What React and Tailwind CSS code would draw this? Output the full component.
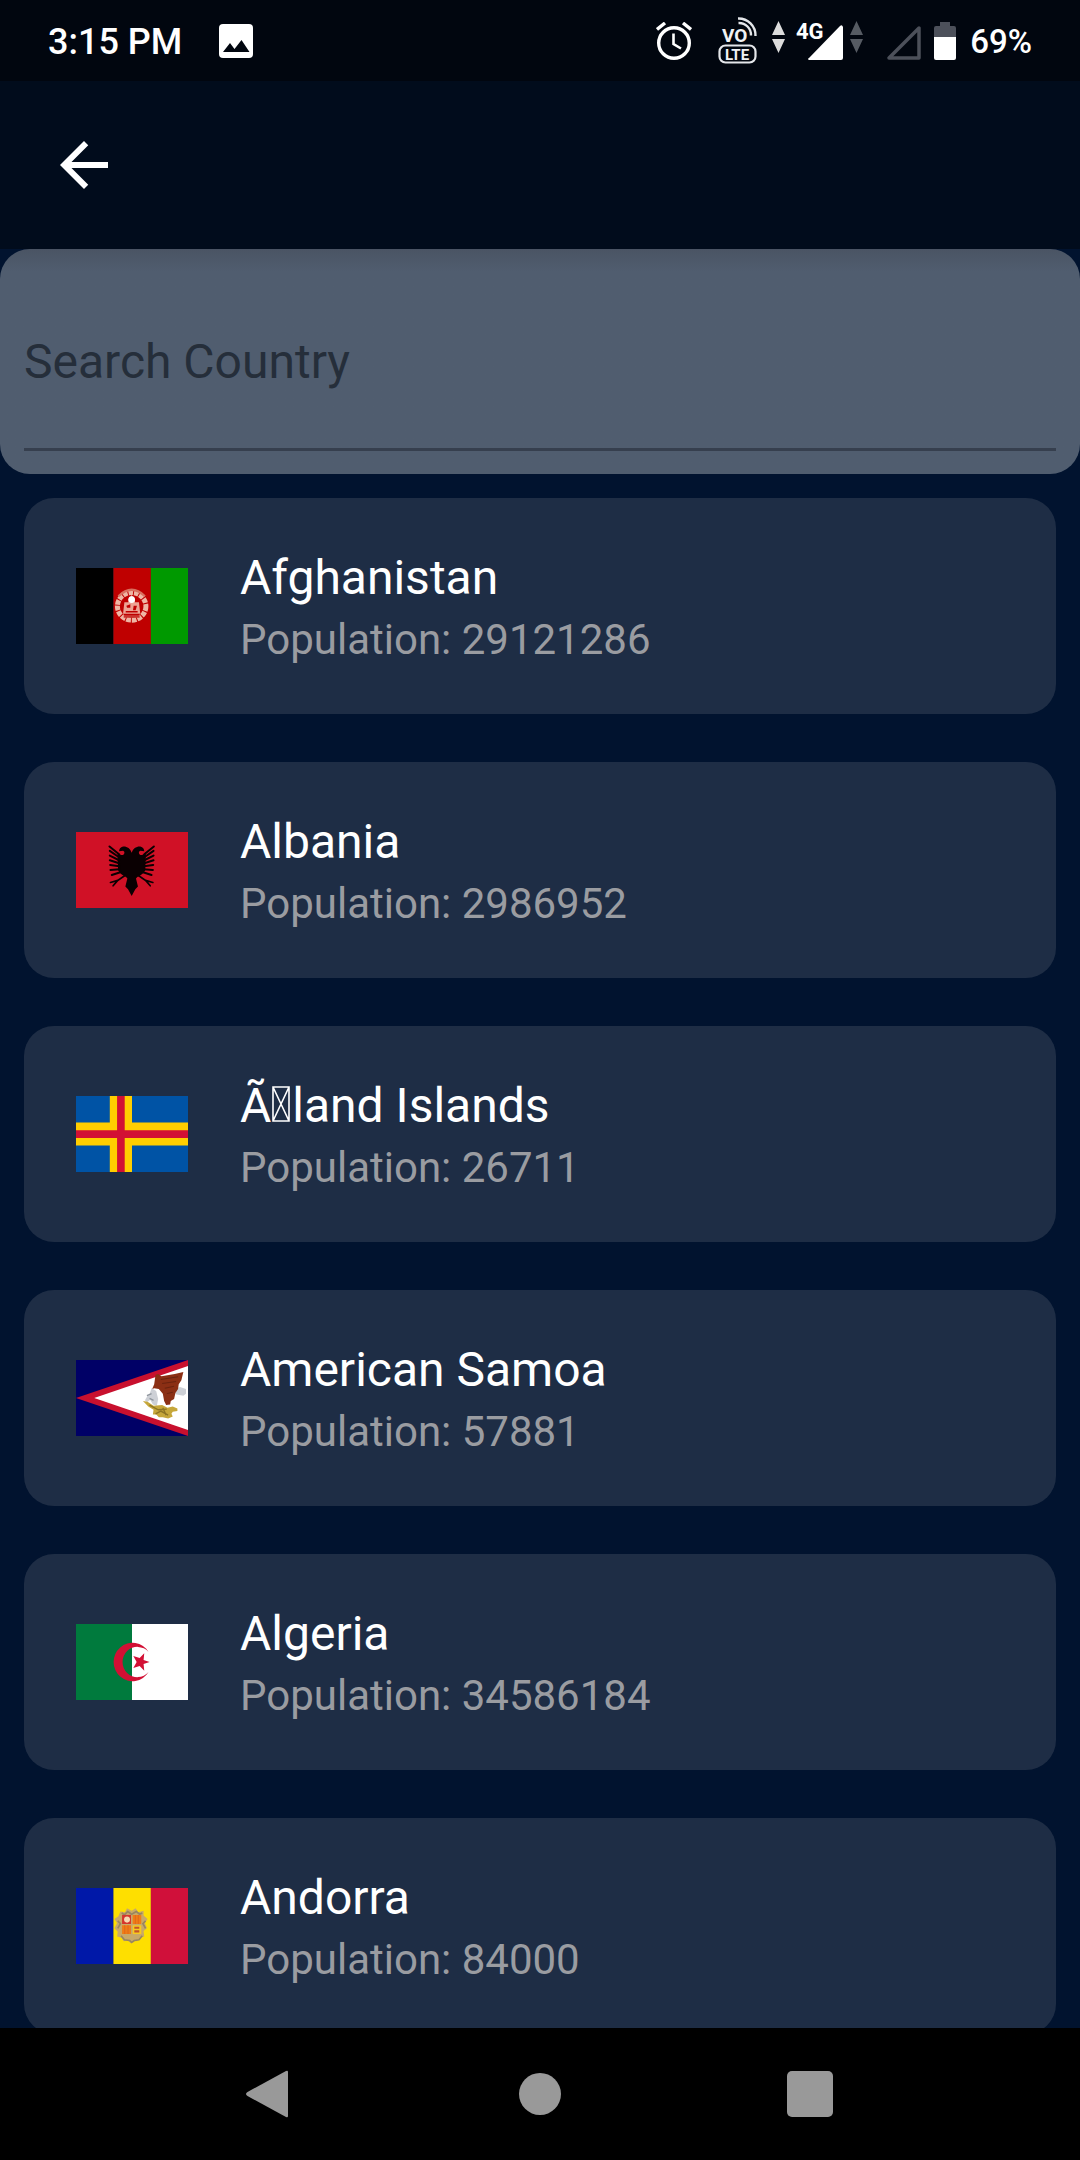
import React from "react";
import { MdArrowBack } from "react-icons/md";

function FlagFrame({ label, children }) {
  return (
    <svg
      role="img"
      aria-label={label}
      viewBox="0 0 338 226"
      preserveAspectRatio="none"
      className="h-[76px] w-[112px] shrink-0"
    >
      {children}
    </svg>
  );
}

function AfghanistanFlag() {
  return (
    <FlagFrame label="Flag of Afghanistan">
      <rect width="113" height="226" fill="#000" />
      <rect x="113" width="113" height="226" fill="#bf0000" />
      <rect x="226" width="112" height="226" fill="#009900" />
      <ellipse cx="168" cy="114" rx="43" ry="41" fill="none" stroke="#efb6a4" strokeWidth="15" strokeDasharray="14 3" />
      <path d="M128 84 Q168 46 208 84" fill="none" stroke="#d9705f" strokeWidth="7" />
      <path d="M168 80l10 12v10h12l4 34h-52l4-34h12v-10z" fill="#eda494" />
      <path d="M152 112l12-4v10h-10z M174 112h10l-4 14h-8z M150 128h36v4h-36z" fill="#bf0000" />
      <path d="M144 140h48v8h-48z" fill="#c9342e" />
      <circle cx="168" cy="94" r="10" fill="#fff" />
    </FlagFrame>
  );
}

function AlbaniaFlag() {
  return (
    <FlagFrame label="Flag of Albania">
      <rect width="338" height="226" fill="#d01126" />
      <g fill="#0a0002">
        <path d="M168 62c-4-14-15-20-26-19c-8 2-12 8-12 14l12-1c6 3 5 8 1 12c-5 2-10-1-18-8l2 54c5 10 14 16 24 20l4 4l-6 24l8 8l11 20l11-20l8-8l-6-24l4-4c10-4 19-10 24-20l2-54c-8 7-13 10-18 8c-4-4-5-9 1-12l12 1c0-6-4-12-12-14c-11-1-22 5-26 19z" />
      </g>
      <g stroke="#0a0002" strokeWidth="6" strokeLinecap="round" fill="none">
        <path d="M130 66L101 43 M130 75L102 56 M130 84L102 70 M130 93L102 84 M131 102L103 98 M132 111L104 113 M136 119L108 128" />
        <path d="M206 66L235 43 M206 75L234 56 M206 84L234 70 M206 93L234 84 M205 102L233 98 M204 111L232 113 M200 119L228 128" />
        <path d="M150 128L126 144L104 150 M126 144L112 160 M186 128L210 144L232 150 M210 144L224 160" strokeWidth="5" />
      </g>
    </FlagFrame>
  );
}

function AlandFlag() {
  return (
    <FlagFrame label="Flag of Åland Islands">
      <rect width="338" height="226" fill="#0053a5" />
      <path d="M102 0h67v226h-67z M0 79h338v68H0z" fill="#ffce00" />
      <path d="M124 0h23v226h-23z M0 102h338v23H0z" fill="#d21034" />
    </FlagFrame>
  );
}

function SamoaFlag() {
  return (
    <FlagFrame label="Flag of American Samoa">
      <rect width="338" height="226" fill="#000066" />
      <path d="M0 113L338 0v226z" fill="#c8102e" />
      <path d="M55 113L338 18v190z" fill="#fff" />
      <path
        d="M228 84l14 8l6 24l-4 20l-12-4l-8-14l-10 8l-6-6l8-14l6-4z M302 84l12-4l18 6v14l-8 6l-24-4z"
        fill="#cdd0d6"
      />
      <path
        d="M230 86l6-14l4-28l8-2l10 6l40-6l26-6l-6 24l-8 12l-2 14l-8 12l-4 18l-10 6l-2 10l-12 2l-6-12l-4-22l-12-14l-14-2z"
        fill="#8b2f14"
      />
      <path d="M256 58l52-8 M260 70l42-6 M268 84l28-6 M274 100l18-4" stroke="#6a230f" strokeWidth="3" fill="none" />
      <path d="M214 106l14-6 M222 114l12 6" stroke="#8f959d" strokeWidth="4" fill="none" />
      <path
        d="M202 122l14 2l18 12l26-2l16 8l16-4l14 6v8l-14 2l-4 6l4 8l-14 6l-16-4l-12 0l-8-8l-10 0l2-14l-16-10z"
        fill="#c6a73a"
      />
      <path d="M222 134l26 14l26-2 M240 160l16-8l22 12 M262 142l10 22" stroke="#8c7423" strokeWidth="4" fill="none" />
    </FlagFrame>
  );
}

function AlgeriaFlag() {
  return (
    <FlagFrame label="Flag of Algeria">
      <rect width="169" height="226" fill="#007a3d" />
      <rect x="169" width="169" height="226" fill="#fff" />
      <path d="M219 83a57 57 0 1 0 0 60a45 45 0 1 1 0-60z" fill="#d21034" />
      <path
        d="M222 113l-18 6l2 20l-14-14l-19 6l10-18l-10-18l19 6l14-14l-2 20z"
        fill="#d21034"
      />
    </FlagFrame>
  );
}

function AndorraFlag() {
  return (
    <FlagFrame label="Flag of Andorra">
      <rect width="113" height="226" fill="#0018a8" />
      <rect x="113" width="113" height="226" fill="#fedf00" />
      <rect x="226" width="112" height="226" fill="#d0103a" />
      <path
        d="M134 70l14 2l6-12l14 8l12-8l8 12l16-4l0 14l12 10l-8 12l6 16l-10 8l2 16l-14 4l-8 10l-10-2l-8 8l-10-8l-12 2l-6-10l-14-4l2-14l-10-10l8-16l-8-12l12-8z"
        fill="#c9a968"
      />
      <path
        d="M138 74l8 6l10-10l12 8l14-8l10 8l8-4 M126 98l8 8l-8 14 M210 98l-8 8l8 14 M136 142l10 12l16 2l6 6l8-6l14-2l10-12"
        stroke="#99865f"
        strokeWidth="5"
        fill="none"
      />
      <path d="M139 80h27v27h-27z" fill="#d5362d" />
      <path d="M171 80h26v27h-26z M139 111h27v26h-27z" fill="#ef7d16" />
      <path d="M171 111h26v26h-26z" fill="#f7c920" />
      <circle cx="154" cy="94" r="9" fill="#f6d8b2" />
      <path d="M176 118h15 M176 129h15" stroke="#c5532a" strokeWidth="6" />
      <path d="M179 80v27 M188 80v27 M147 111v26 M157 111v26" stroke="#e2661c" strokeWidth="3" />
    </FlagFrame>
  );
}

/* Box drawn where the name holds a character without a glyph. */
function MissingGlyph() {
  return (
    <svg aria-hidden="true" viewBox="0 0 21 36" className="inline-block h-9 w-[21px] align-baseline">
      <path d="M2 1h16v34H2z M2 1l16 34 M18 1L2 35" fill="none" stroke="#fff" strokeWidth="1.6" />
    </svg>
  );
}

const countries = [
  { id: "af", name: "Afghanistan", population: 29121286, Flag: AfghanistanFlag },
  { id: "al", name: "Albania", population: 2986952, Flag: AlbaniaFlag },
  {
    id: "ax",
    name: (
      <>
        Ã<MissingGlyph />land Islands
      </>
    ),
    population: 26711,
    Flag: AlandFlag,
  },
  { id: "as", name: "American Samoa", population: 57881, Flag: SamoaFlag },
  { id: "dz", name: "Algeria", population: 34586184, Flag: AlgeriaFlag },
  { id: "ad", name: "Andorra", population: 84000, Flag: AndorraFlag },
];

function DataArrows({ color }) {
  return (
    <svg viewBox="0 0 13 32" className="h-8 w-[13px]" aria-hidden="true">
      <path d="M6.5 0L13 14H0z M0 18h13L6.5 32z" fill={color} />
    </svg>
  );
}

function StatusBar() {
  return (
    <div className="flex h-[81px] shrink-0 items-center justify-between bg-[#01060f] px-12 text-white">
      <div className="flex items-center gap-[37px]">
        <span className="pt-[3px] text-[36px] leading-[42px] font-medium">3:15 PM</span>
        <svg viewBox="0 0 34 34" className="h-[34px] w-[34px]" aria-hidden="true">
          <rect width="34" height="34" rx="4" fill="#fff" />
          <path d="M4 28l7-9l4.500 6l7-9l8 12z" fill="#01060f" />
        </svg>
      </div>
      <div className="flex items-center">
        <svg viewBox="0 0 36 38" className="mr-[26px] h-[38px] w-9" aria-label="Alarm set" role="img">
          <circle cx="18" cy="21" r="15.300" fill="none" stroke="#fff" strokeWidth="3.400" />
          <path d="M17.500 11.500v10.500l7.500 4.500" fill="none" stroke="#fff" strokeWidth="2.600" />
          <path d="M1 7.500l8-6.500 M35 7.500L27 1" stroke="#fff" strokeWidth="3.400" />
        </svg>
        <svg viewBox="0 0 40 48" className="mr-[14px] h-12 w-10" role="img" aria-label="VoLTE">
          <text x="4" y="25" fontFamily="Roboto, sans-serif" fontWeight="700" fontSize="19" fill="#f1f2f4">VO</text>
          <path d="M20 1.500A17 17 0 0 1 37.500 19 M20.500 6A12 12 0 0 1 33 18.500" fill="none" stroke="#e4e6ea" strokeWidth="2.400" />
          <rect x="1.500" y="28.500" width="36" height="17" rx="6" fill="none" stroke="#e4e6ea" strokeWidth="2.200" />
          <text x="19" y="42.500" textAnchor="middle" fontFamily="Roboto, sans-serif" fontWeight="700" fontSize="15" fill="#f1f2f4">LTE</text>
        </svg>
        <div className="-mt-2 mr-[10px]">
          <DataArrows color="#dcdcdc" />
        </div>
        <svg viewBox="0 0 48 50" className="mr-[7px] h-[50px] w-12 overflow-visible" role="img" aria-label="4G signal">
          <path d="M48 11v31a2 2 0 0 1-2 2H14q-2-1 0-2L45 10q2-2 3 1z" fill="#fff" />
          <text x="1" y="23" fontFamily="Roboto, sans-serif" fontWeight="700" fontSize="22" fill="#fff">4G</text>
        </svg>
        <div className="-mt-2 mr-6">
          <DataArrows color="#565b63" />
        </div>
        <svg viewBox="0 0 34 42" className="mr-[13px] h-[42px] w-[34px]" aria-hidden="true">
          <path d="M32 8v30H2z" fill="none" stroke="#4c505a" strokeWidth="3.500" strokeLinejoin="round" />
        </svg>
        <svg viewBox="0 0 22 38" className="mr-[14px] h-[38px] w-[22px]" role="img" aria-label="Battery">
          <path d="M6 0h10v4h4a2 2 0 0 1 2 2v10H0V6a2 2 0 0 1 2-2h4z" fill="#4c505a" />
          <path d="M0 15h22v21a2 2 0 0 1-2 2H2a2 2 0 0 1-2-2z" fill="#fff" />
        </svg>
        <span className="pt-[3px] text-[33px] leading-[42px] font-medium">69%</span>
      </div>
    </div>
  );
}

function CountryCard({ name, population, Flag }) {
  return (
    <li className="flex items-center gap-[52px] rounded-[30px] bg-[#1e2d45] px-[52px] py-[50px]">
      <Flag />
      <div className="flex min-w-0 flex-col gap-2">
        <h2 className="text-[48px] leading-[60px] font-normal text-white">{name}</h2>
        <p className="text-[42px] leading-[48px] text-[#9a9ca1]">Population: {population}</p>
      </div>
    </li>
  );
}

function NavigationBar() {
  return (
    <nav className="flex h-[132px] shrink-0 items-center justify-center bg-black">
      <button type="button" aria-label="Back" className="flex w-1/4 justify-center">
        <svg viewBox="0 0 48 48" className="h-12 w-12">
          <path d="M42 2v44q0 2-2 1L1.500 26q-3-2 0-4L40 1q2-1 2 1z" fill="#999" />
        </svg>
      </button>
      <button type="button" aria-label="Home" className="flex w-1/4 justify-center">
        <span className="h-[42px] w-[42px] rounded-full bg-[#999999]" />
      </button>
      <button type="button" aria-label="Recent apps" className="flex w-1/4 justify-center">
        <span className="h-[46px] w-[46px] rounded-[5px] bg-[#999999]" />
      </button>
    </nav>
  );
}

export default function App() {
  return (
    <div className="flex h-screen flex-col overflow-hidden bg-[#01132f] font-[Roboto,sans-serif]">
      <StatusBar />
      <header className="flex h-[168px] shrink-0 items-center bg-[#010c1c] px-12">
        <button type="button" aria-label="Go back" className="text-white">
          <MdArrowBack className="h-[72px] w-[72px]" />
        </button>
      </header>
      <main className="flex min-h-0 flex-1 flex-col overflow-hidden">
        <div className="shrink-0 rounded-[30px] bg-linear-to-b from-[#4a5464] to-[#505d6f] to-10% px-6 pb-[23px]">
          <input
            type="text"
            aria-label="Search Country"
            placeholder="Search Country"
            className="block h-[202px] w-full border-b-[3px] border-[#363f4e] bg-transparent pt-[26px] pb-0 text-[48px] text-white outline-none placeholder:text-[#252e3a]"
          />
        </div>
        <ul className="flex flex-col gap-12 p-6">
          {countries.map(({ id, ...country }) => (
            <CountryCard key={id} {...country} />
          ))}
        </ul>
      </main>
      <NavigationBar />
    </div>
  );
}
